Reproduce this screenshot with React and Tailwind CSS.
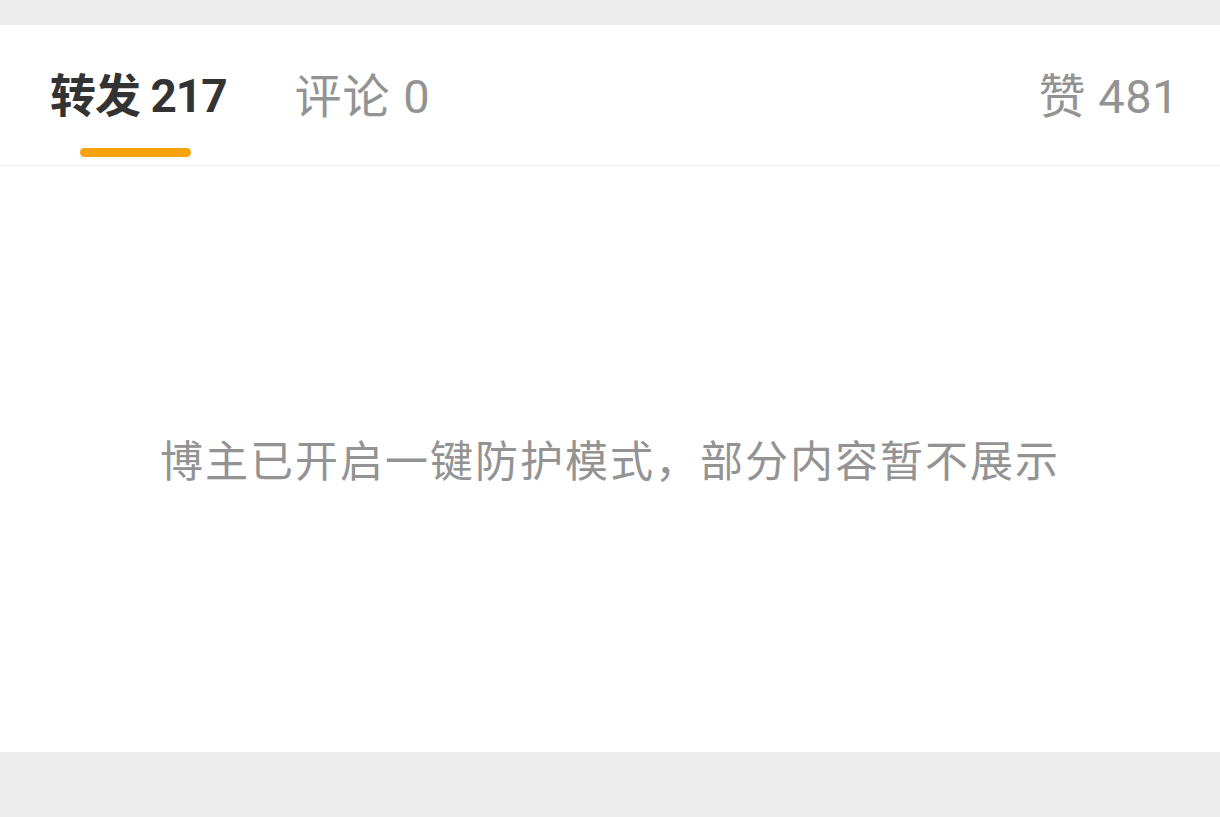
import React from 'react';

const FONT = { fontFamily: 'Roboto, "Noto Sans CJK SC", "Noto Sans", sans-serif' };

export default function App() {
    return (
        <div className="w-[1220px] h-[817px] flex flex-col bg-[#ececec]" style={FONT}>
            <div className="h-[25px] shrink-0 bg-[#ededed]" />
            <div className="bg-white flex flex-col">
                {/* tabs */}
                <div className="h-[141px] flex items-start justify-between pl-[50px] pr-[41px] border-b border-[#f0f0f0]">
                    <div className="flex items-start gap-[68px]">
                        <div className="flex flex-col">
                            <span className="text-[46px] leading-none mt-[48px] font-bold text-[#333333] tracking-[-1px]">转发 217</span>
                            <span className="mt-[29px] ml-[30px] w-[111px] h-[9px] rounded-full bg-[#f7a20f]" />
                        </div>
                        <span className="text-[47px] leading-none mt-[48px] text-[#939393] tracking-[1px]">评论 0</span>
                    </div>
                    <span className="text-[47px] leading-none mt-[48px] text-[#939393] tracking-[0.5px]">赞 481</span>
                </div>
                {/* body */}
                <div className="h-[586px] pt-[6px] flex items-center justify-center">
                    <p className="text-[43px] leading-none text-[#939393] tracking-[2px]">博主已开启一键防护模式，部分内容暂不展示</p>
                </div>
            </div>
            <div className="flex-1 bg-[#ececec]" />
        </div>
    );
}
